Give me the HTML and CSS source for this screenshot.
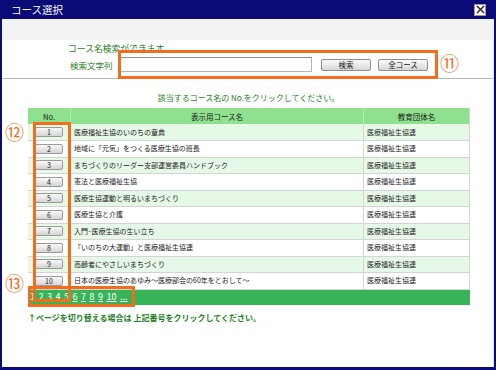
FILE: index.html
```html
<!DOCTYPE html>
<html lang="ja">
<head>
  <meta charset="UTF-8">
  <title>コース選択</title>
  <link rel="stylesheet" href="styles.css">
</head>
<body>

<div class="window">
  <div class="titlebar">
    <span class="title">コース選択</span>
    <a href="#" class="close">
      <svg width="9" height="9" viewBox="0 0 9 9"><path d="M1 1 L8 8 M8 1 L1 8" stroke="#222" stroke-width="1.4"/></svg>
    </a>
  </div>
  <div class="toolbar"></div>

  <div class="content">
    <!-- Search -->
    <div class="search">
      <p class="intro">コース名検索ができます。</p>
      <div class="search-form">
        <label class="search-label">検索文字列</label>
        <input type="text" class="search-input">
        <button class="btn">検索</button>
        <button class="btn">全コース</button>
      </div>
    </div>

    <p class="lead">該当するコース名の No.をクリックしてください。</p>

    <!-- Course list -->
    <table class="courses">
      <thead>
        <tr><th class="col-no">No.</th><th class="col-name">表示用コース名</th><th class="col-org">教育団体名</th></tr>
      </thead>
      <tbody>
        <tr><td class="col-no"><button class="no-btn">1</button></td><td>医療福祉生協のいのちの章典</td><td>医療福祉生協連</td></tr>
        <tr><td class="col-no"><button class="no-btn">2</button></td><td>地域に「元気」をつくる医療生協の班長</td><td>医療福祉生協連</td></tr>
        <tr><td class="col-no"><button class="no-btn">3</button></td><td>まちづくりのリーダー支部運営委員ハンドブック</td><td>医療福祉生協連</td></tr>
        <tr><td class="col-no"><button class="no-btn">4</button></td><td>憲法と医療福祉生協</td><td>医療福祉生協連</td></tr>
        <tr><td class="col-no"><button class="no-btn">5</button></td><td>医療生協運動と明るいまちづくり</td><td>医療福祉生協連</td></tr>
        <tr><td class="col-no"><button class="no-btn">6</button></td><td>医療生協と介護</td><td>医療福祉生協連</td></tr>
        <tr><td class="col-no"><button class="no-btn">7</button></td><td>入門･医療生協の生い立ち</td><td>医療福祉生協連</td></tr>
        <tr><td class="col-no"><button class="no-btn">8</button></td><td>「いのちの大運動」と医療福祉生協連</td><td>医療福祉生協連</td></tr>
        <tr><td class="col-no"><button class="no-btn">9</button></td><td>高齢者にやさしいまちづくり</td><td>医療福祉生協連</td></tr>
        <tr><td class="col-no"><button class="no-btn">10</button></td><td>日本の医療生協のあゆみ～医療部会の60年をとおして～</td><td>医療福祉生協連</td></tr>
      </tbody>
      <tfoot>
        <tr><td colspan="3" class="pager">
          <span class="current">1</span><a href="#">2</a><a href="#">3</a><a href="#">4</a><a href="#">5</a><a href="#">6</a><a href="#">7</a><a href="#">8</a><a href="#">9</a><a href="#">10</a><a href="#">...</a>
        </td></tr>
      </tfoot>
    </table>

    <p class="note">↑ページを切り替える場合は 上記番号をクリックしてください。</p>
  </div>

  <!-- Annotations -->
  <div class="mark mark-search"></div>
  <div class="mark mark-no"></div>
  <div class="mark mark-pager"></div>
  <span class="num num-11">⑪</span>
  <span class="num num-12">⑫</span>
  <span class="num num-13">⑬</span>
</div>

</body>
</html>
```

FILE: styles.css
```css
:root {
  --navy: #0b0b78;
  --green-text: #1f7f1f;
  --head-green: #8fe08f;
  --row-green: #e6f9e6;
  --pager-green: #37b457;
  --orange: #f26d1e;
  --cell-border: #d4d4d4;
}

body {
  margin: 0;
  font-family: "Noto Sans CJK JP", sans-serif;
  background: #fff;
}

.window {
  position: relative;
  width: 496px;
  height: 370px;
  box-sizing: border-box;
  border: 2px solid var(--navy);
  border-top: 0;
  border-bottom-width: 3px;
  background: #fff;
  overflow: hidden;
}

.titlebar {
  display: flex;
  align-items: center;
  justify-content: space-between;
  height: 19px;
  padding: 0 8px 0 9px;
  background: var(--navy);
}

.title {
  color: #fff;
  font-size: 10.5px;
  line-height: 19px;
}

.close {
  display: flex;
  align-items: center;
  justify-content: center;
  width: 12px;
  height: 12px;
  background: #fff;
  border: 1px solid #9a9a9a;
  box-sizing: border-box;
}

.toolbar {
  height: 21px;
  background: #f3f3f3;
}

.content {
  padding: 0 24px 0 26px;
  border-right: 1px solid #e2e2e2;
  height: 330px;
}

/* Search */
.search {
  margin: 0 -24px 0 -26px;
  padding: 4px 0 6px 66px;
  border-bottom: 1px solid #b8b8b8;
}

.intro {
  margin: 0;
  font-size: 8.8px;
  line-height: 10px;
  color: var(--green-text);
}

.search-form {
  display: flex;
  align-items: center;
  margin-top: 3px;
  padding-left: 2px;
}

.search-label {
  width: 50px;
  font-size: 8.5px;
  color: var(--green-text);
}

.search-input {
  width: 192px;
  height: 15px;
  box-sizing: border-box;
  margin: 0 9px 0 0;
  padding: 0;
  border: 1px solid #b4b4b4;
  border-top-color: #8c8c8c;
}

.btn {
  width: 50px;
  height: 12px;
  margin: 0 7px 0 0;
  padding: 0;
  font-family: inherit;
  font-size: 7.5px;
  line-height: 10px;
  color: #222;
  background: linear-gradient(#fbfbfb, #d6d6d6);
  border: 1px solid #8e8e8e;
  border-radius: 2px;
}

.lead {
  margin: 14px 0 5px;
  text-align: center;
  font-size: 8px;
  line-height: 10px;
  color: var(--green-text);
}

/* Course table */
.courses {
  width: 442px;
  border-collapse: collapse;
  font-size: 7px;
  line-height: 9px;
  color: #222;
}

.courses thead tr {
  height: 16px;
}

.courses tbody tr {
  height: 16.5px;
}

.courses th {
  padding: 0;
  font-weight: normal;
  font-size: 7.5px;
  background: var(--head-green);
  border-right: 1px solid #b7ecb7;
}

.courses td {
  padding: 0 0 0 3px;
  border: 1px solid var(--cell-border);
  border-top: 0;
  white-space: nowrap;
}

.courses tbody tr:nth-child(odd) {
  background: var(--row-green);
}

.col-no {
  width: 42px;
}

.col-org {
  width: 105px;
}

.courses td.col-no {
  padding: 0;
  text-align: center;
  border-left: 0;
}

.no-btn {
  display: block;
  width: 28px;
  height: 10px;
  margin: 0 auto;
  padding: 0;
  font-family: inherit;
  font-size: 7px;
  line-height: 8px;
  color: #222;
  background: linear-gradient(#fafafa, #d4d4d4);
  border: 1px solid #9a9a9a;
  border-radius: 2px;
}

.courses tfoot tr {
  height: 16px;
}

.courses td.pager {
  padding: 0 0 0 2px;
  background: var(--pager-green);
  border: 0;
  font-size: 9px;
  line-height: 12px;
  color: #fff;
}

.pager span,
.pager a {
  margin-right: 3.5px;
  color: #fff;
}

.pager a {
  text-decoration: underline;
}

.note {
  margin: 8px 0 0;
  font-size: 8px;
  line-height: 10px;
  font-weight: 700;
  color: var(--green-text);
}

/* Annotation overlays */
.mark {
  position: absolute;
  border: 3px solid var(--orange);
  box-sizing: border-box;
}

.mark-search {
  left: 116px;
  top: 50px;
  width: 320px;
  height: 29px;
}

.mark-no {
  left: 31px;
  top: 122px;
  width: 38px;
  height: 180px;
}

.mark-pager {
  left: 26px;
  top: 286px;
  width: 107px;
  height: 21px;
}

.num {
  position: absolute;
  font-size: 19px;
  line-height: 20px;
  color: var(--orange);
}

.num-11 {
  left: 438px;
  top: 53px;
}

.num-12 {
  left: 3px;
  top: 122px;
}

.num-13 {
  left: 3px;
  top: 273px;
}
```
